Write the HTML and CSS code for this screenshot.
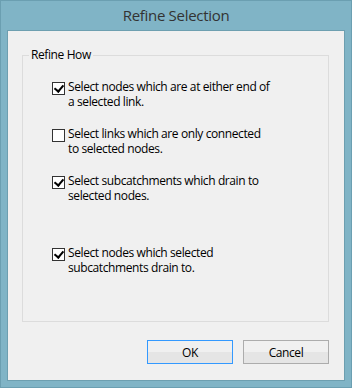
FILE: index.html
```
<!DOCTYPE html>
<html lang="en">
<head>
    <meta charset="UTF-8">
    <title>Refine Selection</title>
    <link rel="stylesheet" href="styles.css">
</head>
<body>
    <div class="window">
        <div class="titlebar">Refine Selection</div>
        <div class="client">
            <fieldset class="group">
                <legend>Refine How</legend>
                <label class="option first">
                    <span class="check checked"></span>
                    <span class="text">Select nodes which are at either end of<br>a selected link.</span>
                </label>
                <label class="option">
                    <span class="check"></span>
                    <span class="text">Select links which are only connected<br>to selected nodes.</span>
                </label>
                <label class="option">
                    <span class="check checked"></span>
                    <span class="text">Select subcatchments which drain to<br>selected nodes.</span>
                </label>
                <label class="option wide">
                    <span class="check checked"></span>
                    <span class="text">Select nodes which selected<br>subcatchments drain to.</span>
                </label>
            </fieldset>
            <div class="buttons">
                <button type="button" class="btn default">OK</button>
                <button type="button" class="btn">Cancel</button>
            </div>
        </div>
    </div>
</body>
</html>
```

FILE: styles.css
```
* {
    margin: 0;
    padding: 0;
    box-sizing: border-box;
}
body {
    font-family: "Open Sans", "Noto Sans", sans-serif;
    font-size: 12px;
    letter-spacing: -0.4px;
    color: #000;
    background: #fff;
}
.window {
    width: 352px;
    height: 388px;
    display: flex;
    flex-direction: column;
    border: 1px solid #6b9fb1;
    background: #80b4c6;
    padding: 0 6px 6px;
}
.titlebar {
    height: 29px;
    line-height: 29px;
    text-align: center;
    font-size: 15px;
    letter-spacing: -0.3px;
    color: #333;
}
.client {
    flex: 1;
    display: flex;
    flex-direction: column;
    border: 1px solid #6d9fb0;
    background: #f0f0f0;
}
.group {
    margin: 16px 15px 0 14px;
    height: 275px;
    border: 1px solid #dcdcdc;
    padding: 0;
}
.group legend {
    margin-left: 6px;
    padding: 0 2px;
    line-height: 16px;
}
.option {
    display: flex;
    align-items: flex-start;
    gap: 3px;
    line-height: 15px;
    margin: 17px 0 0 29px;
}
.option.first {
    margin-top: 16px;
}
.option.wide {
    margin-top: 42px;
}
.check {
    width: 13px;
    height: 13px;
    margin-top: 3px;
    flex: none;
    border: 1px solid #333;
    background: #fff;
    position: relative;
}
.check.checked::after {
    content: "";
    position: absolute;
    left: 3px;
    top: 0;
    width: 4px;
    height: 7px;
    border: solid #000;
    border-width: 0 2px 2px 0;
    transform: rotate(40deg);
}
.buttons {
    display: flex;
    justify-content: flex-end;
    gap: 10px;
    margin: 18px 15px 0 0;
}
.btn {
    width: 86px;
    height: 24px;
    font-family: inherit;
    font-size: 12px;
    letter-spacing: inherit;
    color: #000;
    border: 1px solid #acacac;
    background: linear-gradient(#f0f0f0 50%, #e5e5e5 50%);
}
.btn.default {
    border-color: #3399ff;
}
```
